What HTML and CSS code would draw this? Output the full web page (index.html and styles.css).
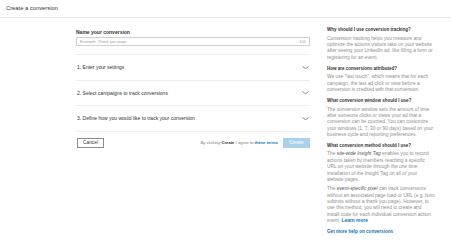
FILE: index.html
```html
<!DOCTYPE html>
<html>
<head>
<meta charset="utf-8">
<link rel="stylesheet" href="styles.css">
</head>
<body>
<header class="topbar">Create a conversion</header>
<div class="page">
  <main class="form">
    <div class="name-block">
      <label class="label">Name your conversion</label>
      <div class="input"><span class="placeholder">Example: Thank you page</span><span class="counter">100</span></div>
    </div>
    <div class="section"><span>1. Enter your settings</span><svg class="chev" viewBox="0 0 8 4"><polyline points="0.5,0.5 4,3.3 7.5,0.5"/></svg></div>
    <div class="section"><span>2. Select campaigns to track conversions</span><svg class="chev" viewBox="0 0 8 4"><polyline points="0.5,0.5 4,3.3 7.5,0.5"/></svg></div>
    <div class="section"><span>3. Define how you would like to track your conversion</span><svg class="chev" viewBox="0 0 8 4"><polyline points="0.5,0.5 4,3.3 7.5,0.5"/></svg></div>
    <div class="actions">
      <button class="btn-cancel">Cancel</button>
      <div class="right-actions">
        <span class="terms">By clicking <b>Create</b> I agree to <a class="link">these terms</a></span>
        <button class="btn-create">Create</button>
      </div>
    </div>
  </main>
  <aside class="help">
    <h3>Why should I use conversion tracking?</h3>
    <p>Conversion tracking helps you measure and<br>optimize the actions visitors take on your website<br>after seeing your LinkedIn ad, like filling a form or<br>registering for an event.</p>
    <h3>How are conversions attributed?</h3>
    <p>We use "last touch", which means that for each<br>campaign, the last ad click or view before a<br>conversion is credited with that conversion.</p>
    <h3>What conversion window should I use?</h3>
    <p>The conversion window sets the amount of time<br>after someone clicks or views your ad that a<br>conversion can be counted. You can customize<br>your windows (1, 7, 30 or 90 days) based on your<br>business cycle and reporting preferences.</p>
    <h3>What conversion method should I use?</h3>
    <p class="tight">The <em>site-wide Insight Tag</em> enables you to record<br>actions taken by members reaching a specific<br>URL on your website through the one time<br>installation of the Insight Tag on all of your<br>website pages.</p>
    <p>The <em>event-specific pixel</em> can track conversions<br>without an associated page load or URL (e.g. form<br>submits without a thank you page). However, to<br>use this method, you will need to create and<br>install code for each individual conversion action<br>event. <a class="link">Learn more</a></p>
    <a class="link more">Get more help on conversions</a>
  </aside>
</div>
</body>
</html>
```
FILE: styles.css
```css
html, body {
  margin: 0;
  padding: 0;
  background: #fff;
  font-family: "Liberation Sans", Arial, sans-serif;
  color: #333;
}
.topbar {
  display: block;
  height: 17px;
  line-height: 17px;
  padding-left: 6px;
  font-size: 5.8px;
  color: #333;
  border-bottom: 1px solid #e6e6e6;
}
.page {
  display: flex;
  gap: 17px;
  padding: 10px 0 0 76px;
}
.form {
  width: 234px;
  flex: none;
}
.name-block {
  padding-top: 0.6px;
  padding-bottom: 8.5px;
  border-bottom: 1px solid #ececec;
}
.label {
  display: block;
  font-size: 5px;
  line-height: 6px;
  font-weight: bold;
  color: #333;
  margin-bottom: 2px;
}
.input {
  height: 9px;
  border: 1px solid #cfcfcf;
  box-sizing: border-box;
  display: flex;
  align-items: center;
  justify-content: space-between;
  padding: 0 3px;
  font-size: 4px;
  color: #a0a0a0;
}
.section {
  height: 25.5px;
  box-sizing: border-box;
  border-bottom: 1px solid #ececec;
  display: flex;
  align-items: center;
  justify-content: space-between;
  font-size: 5px;
  color: #333;
  padding-left: 1px;
}
.chev {
  width: 7px;
  height: 3.5px;
  margin-right: 1px;
  fill: none;
  stroke: #555;
  stroke-width: 0.8;
}
.actions {
  display: flex;
  justify-content: space-between;
  align-items: center;
  margin-top: 6px;
}
.btn-cancel, .btn-create {
  font-family: inherit;
  width: 27px;
  height: 10px;
  padding: 0;
  font-size: 4.8px;
  box-sizing: border-box;
}
.btn-cancel {
  margin-left: 1px;
  background: #fff;
  border: 1px solid #8c8c8c;
  color: #333;
}
.btn-create {
  background: #a9d1ec;
  border: none;
  color: #fff;
}
.right-actions {
  display: flex;
  align-items: center;
  gap: 5px;
}
.terms {
  font-size: 4.2px;
  color: #777;
}
.terms b {
  color: #333;
}
.link {
  color: #0a74b8;
  font-weight: bold;
  text-decoration: none;
}
.help {
  width: 116px;
  flex: none;
  margin-top: -1px;
}
.help h3 {
  margin: 0 0 2.3px 0;
  font-size: 4.5px;
  line-height: 6.35px;
  font-weight: bold;
  color: #333;
}
.help p {
  margin: 0 0 4.6px 0;
  font-size: 4.85px;
  line-height: 6.35px;
  color: #8f8f8f;
  white-space: nowrap;
}
.help p.tight {
  margin-bottom: 3.2px;
}
.help em {
  font-style: italic;
  color: #555;
}
.help .more {
  display: block;
  margin-top: 4.6px;
  font-size: 4.6px;
  line-height: 6.35px;
}
```
